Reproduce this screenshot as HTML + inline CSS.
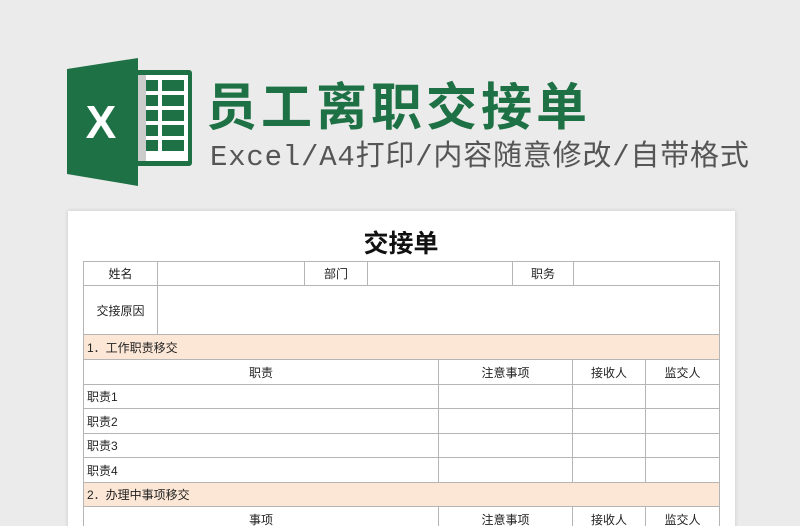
<!DOCTYPE html>
<html><head><meta charset="utf-8"><style>
*{margin:0;padding:0;box-sizing:border-box}
html,body{width:800px;height:526px;overflow:hidden}
body{background:#ebebeb;position:relative;font-family:"Liberation Sans","Noto Sans CJK SC",sans-serif}
.a{position:absolute}
.t1{left:206px;top:66px;font-size:51px;font-weight:bold;color:#1e7145;letter-spacing:4px;white-space:nowrap;font-family:"Liberation Sans","Noto Sans CJK SC",sans-serif}
.t2{left:210px;top:132px;font-size:29px;color:#555;letter-spacing:0.8px;white-space:nowrap;font-family:"Liberation Mono","Noto Sans CJK SC",monospace}
.paper{left:68px;top:211px;width:667px;height:330px;background:#fff;box-shadow:0 0 4px rgba(0,0,0,.15)}
.c{position:absolute;border:1px solid #b5b5b5;font-size:12px;color:#222;display:flex;align-items:center;justify-content:center;white-space:nowrap}
.l{justify-content:flex-start;padding-left:3px}
.s{background:#fce7d6}
</style></head><body>
<svg class="a" style="left:66px;top:58px" width="130" height="128" viewBox="0 0 130 128">
<rect x="64" y="12" width="62" height="96" rx="3" fill="#1e7145"/>
<rect x="68" y="17" width="54" height="86" fill="#fff"/>
<rect x="68" y="17" width="12" height="86" fill="#ccc"/>
<g fill="#1e7145">
<rect x="80" y="22" width="12" height="11"/><rect x="96" y="22" width="22" height="11"/>
<rect x="80" y="37" width="12" height="11"/><rect x="96" y="37" width="22" height="11"/>
<rect x="80" y="52" width="12" height="11"/><rect x="96" y="52" width="22" height="11"/>
<rect x="80" y="67" width="12" height="11"/><rect x="96" y="67" width="22" height="11"/>
<rect x="80" y="82" width="12" height="11"/><rect x="96" y="82" width="22" height="11"/>
</g>
<polygon points="1,11 72,0 72,128 1,116" fill="#1e7145"/>
<text x="35" y="80" font-family="Liberation Sans,sans-serif" font-weight="bold" font-size="46" fill="#fff" text-anchor="middle">X</text>
</svg>
<div class="a t1">员工离职交接单</div>
<div class="a t2">Excel/A4打印/内容随意修改/自带格式</div>
<div class="a paper"></div>
<div class="a" style="left:0;width:800px;top:224px;text-align:center;font-size:25px;font-weight:bold;color:#111;padding-left:2px">交接单</div>

<div class="c" style="left:83px;top:261px;width:75px;height:25px">姓名</div>
<div class="c" style="left:157px;top:261px;width:148px;height:25px"></div>
<div class="c" style="left:304px;top:261px;width:64px;height:25px">部门</div>
<div class="c" style="left:367px;top:261px;width:146px;height:25px"></div>
<div class="c" style="left:512px;top:261px;width:62px;height:25px">职务</div>
<div class="c" style="left:573px;top:261px;width:147px;height:25px"></div>
<div class="c" style="left:83px;top:285px;width:75px;height:50px">交接原因</div>
<div class="c" style="left:157px;top:285px;width:563px;height:50px"></div>
<div class="c l s" style="left:83px;top:334px;width:637px;height:26px">1．工作职责移交</div>

<div class="c" style="left:83px;top:359px;width:356px;height:26px">职责</div>
<div class="c" style="left:438px;top:359px;width:135px;height:26px">注意事项</div>
<div class="c" style="left:572px;top:359px;width:74px;height:26px">接收人</div>
<div class="c" style="left:645px;top:359px;width:75px;height:26px">监交人</div>

<div class="c l" style="left:83px;top:384px;width:356px;height:25px">职责1</div>
<div class="c" style="left:438px;top:384px;width:135px;height:25px"></div>
<div class="c" style="left:572px;top:384px;width:74px;height:25px"></div>
<div class="c" style="left:645px;top:384px;width:75px;height:25px"></div>

<div class="c l" style="left:83px;top:408px;width:356px;height:26px">职责2</div>
<div class="c" style="left:438px;top:408px;width:135px;height:26px"></div>
<div class="c" style="left:572px;top:408px;width:74px;height:26px"></div>
<div class="c" style="left:645px;top:408px;width:75px;height:26px"></div>

<div class="c l" style="left:83px;top:433px;width:356px;height:25px">职责3</div>
<div class="c" style="left:438px;top:433px;width:135px;height:25px"></div>
<div class="c" style="left:572px;top:433px;width:74px;height:25px"></div>
<div class="c" style="left:645px;top:433px;width:75px;height:25px"></div>

<div class="c l" style="left:83px;top:457px;width:356px;height:26px">职责4</div>
<div class="c" style="left:438px;top:457px;width:135px;height:26px"></div>
<div class="c" style="left:572px;top:457px;width:74px;height:26px"></div>
<div class="c" style="left:645px;top:457px;width:75px;height:26px"></div>

<div class="c l s" style="left:83px;top:482px;width:637px;height:25px">2．办理中事项移交</div>

<div class="c" style="left:83px;top:506px;width:356px;height:26px">事项</div>
<div class="c" style="left:438px;top:506px;width:135px;height:26px">注意事项</div>
<div class="c" style="left:572px;top:506px;width:74px;height:26px">接收人</div>
<div class="c" style="left:645px;top:506px;width:75px;height:26px">监交人</div>
</body></html>
